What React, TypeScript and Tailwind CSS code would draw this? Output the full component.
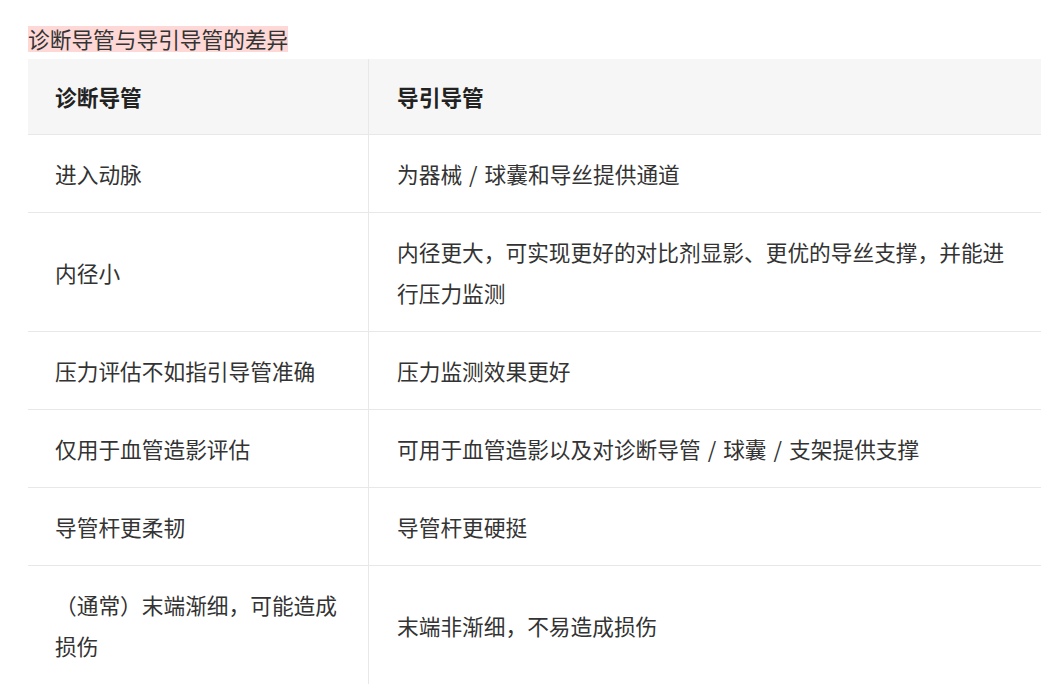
const rows: [string, string][] = [
  ["进入动脉", "为器械 / 球囊和导丝提供通道"],
  ["内径小", "内径更大，可实现更好的对比剂显影、更优的导丝支撑，并能进行压力监测"],
  ["压力评估不如指引导管准确", "压力监测效果更好"],
  ["仅用于血管造影评估", "可用于血管造影以及对诊断导管 / 球囊 / 支架提供支撑"],
  ["导管杆更柔韧", "导管杆更硬挺"],
  ["（通常）末端渐细，可能造成损伤", "末端非渐细，不易造成损伤"],
];

// wider gaps around the slash, like the source font
const withSlashes = (text: string) =>
  text.split(" / ").map((part, i) => (
    <span key={i}>
      {i > 0 && <span className="mx-[7px]">/</span>}
      {part}
    </span>
  ));

export default function App() {
  return (
    <div
      className="w-[1041px] h-[688px] overflow-hidden bg-white text-[#333]"
      style={{ fontFamily: '"Noto Sans CJK SC", "Noto Sans", sans-serif' }}
    >
      <div className="pl-[28px] pt-[26px]">
        <span className="inline-block h-[26px] leading-[26px] bg-[#fdd8d6] text-[21.7px] text-[#333]">
          诊断导管与导引导管的差异
        </span>
      </div>

      <div className="ml-[28px] mt-[6px] w-[1021px] grid grid-cols-[341px_680px] text-[21.7px] leading-[41px]">
        <div className="bg-[#f6f6f6] border-b border-r border-[#e8e8e8] px-[27px] py-[17px] font-bold text-[#222]">
          诊断导管
        </div>
        <div className="bg-[#f6f6f6] border-b border-[#e8e8e8] px-[28px] py-[17px] font-bold text-[#222]">
          导引导管
        </div>
        {rows.map(([a, b], i) => {
          const last = i === rows.length - 1;
          return (
            <div key={i} className="contents">
              <div
                className={`border-r border-[#e8e8e8] px-[27px] py-[18px] flex items-center ${
                  last ? "" : "border-b"
                }`}
              >
                <span>{a}</span>
              </div>
              <div
                className={`border-[#e8e8e8] px-[28px] py-[18px] flex items-center ${
                  last ? "" : "border-b"
                }`}
              >
                <span>{withSlashes(b)}</span>
              </div>
            </div>
          );
        })}
      </div>
    </div>
  );
}
